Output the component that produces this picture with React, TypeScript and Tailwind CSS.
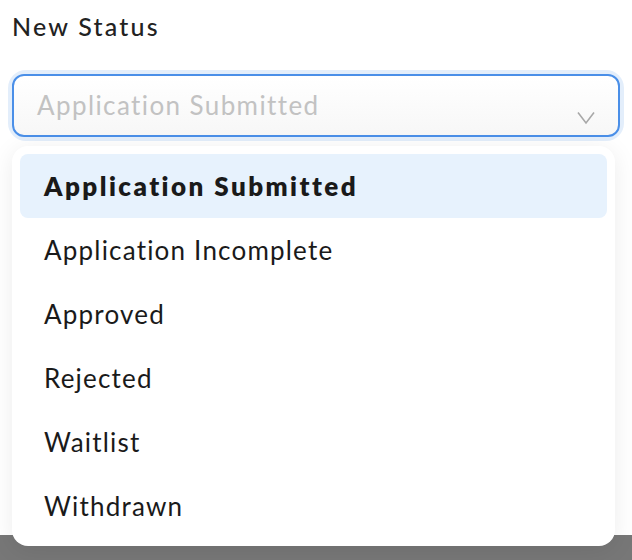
import React from "react";

const items = [
  "Application Submitted",
  "Application Incomplete",
  "Approved",
  "Rejected",
  "Waitlist",
  "Withdrawn",
];

export default function App() {
  return (
    <div
      className="relative w-[632px] h-[560px] overflow-hidden bg-white"
      style={{ fontFamily: "Lato, 'Noto Sans', sans-serif" }}
    >
      <div className="px-3 pt-[10px]">
        <div className="text-[25px] leading-[32px] font-medium tracking-[2.2px] text-[#222]">New Status</div>
        <div className="mt-[32px] rounded-[14px] ring-4 ring-[#e3eefb]">
          <div className="h-[63px] rounded-[12px] border-2 border-[#4a8fe8] bg-gradient-to-b from-white to-[#f7f7f7] flex items-center pl-[23px] pr-[22px] justify-between">
            <span className="text-[26px] tracking-[1.4px] text-[#c2c2c2] -mt-[1px]">Application Submitted</span>
            <svg width="20" height="14" viewBox="0 0 20 14" className="mt-[25px]">
              <path d="M2 1.5 L10 12 L18 1.5" fill="none" stroke="#a8a8a8" strokeWidth="1.6" />
            </svg>
          </div>
        </div>
      </div>
      <div className="absolute left-0 right-0 top-[535px] h-[25px] bg-[#777777]" />
      <div className="absolute left-[12px] top-[146px] w-[603px] h-[400px] rounded-[16px] bg-white p-2 shadow-[0_4px_24px_rgba(0,0,0,0.08)] flex flex-col">
        {items.map((t, i) => (
          <div
            key={t}
            className={
              i === 0
                ? "h-[64px] shrink-0 rounded-[8px] bg-[#e7f2fd] flex items-center pl-[24px] text-[26px] tracking-[2.45px] font-extrabold text-[#1a1a1a]"
                : "h-[64px] shrink-0 flex items-center pl-[24px] text-[26px] tracking-[1.2px] text-[#1a1a1a]"
            }
          >
            {t}
          </div>
        ))}
      </div>
    </div>
  );
}
